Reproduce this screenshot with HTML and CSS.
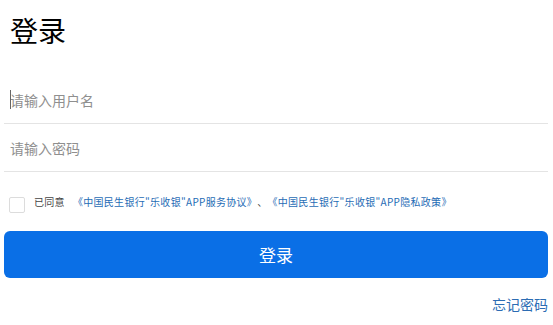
FILE: index.html
```html
<!DOCTYPE html>
<html lang="zh">
<head>
<meta charset="utf-8">
<title>登录</title>
<link rel="stylesheet" href="styles.css">
</head>
<body>
<div class="page">
  <h1 class="title">登录</h1>
  <div class="field"><span class="caret"></span><span class="placeholder">请输入用户名</span></div>
  <div class="field"><span class="placeholder">请输入密码</span></div>
  <div class="agree">
    <span class="checkbox"></span>
    <span class="agree-text">已同意<a class="link first">《中国民生银行"乐收银"APP服务协议》</a><span class="sep">、</span><a class="link">《中国民生银行"乐收银"APP隐私政策》</a></span>
  </div>
  <button class="btn">登录</button>
  <div class="forgot-row"><a class="forgot">忘记密码</a></div>
</div>
</body>
</html>
```
FILE: styles.css
```css
html, body {
  margin: 0;
  padding: 0;
  background: #fff;
}
body {
  font-family: "Noto Sans CJK SC", "Noto Sans", sans-serif;
  color: #000;
}
.page {
  padding: 0 5px 0 4px;
  display: flex;
  flex-direction: column;
}
.title {
  margin: 0;
  padding: 10px 0 0 6px;
  font-size: 28px;
  font-weight: 400;
  line-height: 40px;
  height: 66px;
}
.field {
  height: 47px;
  border-bottom: 1px solid #e4e4e4;
  display: flex;
  align-items: center;
  padding-left: 6px;
  position: relative;
}
.placeholder {
  font-size: 14px;
  color: #8f8f8f;
}
.caret {
  position: absolute;
  left: 6px;
  top: 14px;
  width: 1px;
  height: 19px;
  background: #666;
}
.agree {
  display: flex;
  align-items: center;
  margin-top: 21px;
  padding-left: 5px;
  height: 18px;
}
.checkbox {
  width: 16px;
  height: 16px;
  border: 1px solid #dcdcdc;
  border-radius: 2px;
  box-sizing: border-box;
  margin-top: 6px;
  flex: none;
}
.agree-text {
  margin-left: 9px;
  font-size: 10px;
  color: #444;
  letter-spacing: 0.3px;
  line-height: 14px;
}
.link {
  color: #1f6cb5;
}
.link.first {
  margin-left: 8px;
}
.sep {
  margin: 0 5px 0 5px;
}
.btn {
  margin-top: 20px;
  height: 47px;
  border: none;
  border-radius: 6px;
  background: #0a6fe6;
  color: #fff;
  font-family: inherit;
  font-size: 17px;
  padding: 0;
}
.forgot-row {
  display: flex;
  justify-content: flex-end;
  margin-top: 16px;
}
.forgot {
  font-size: 14px;
  color: #2c6cb3;
  line-height: 20px;
}
```
